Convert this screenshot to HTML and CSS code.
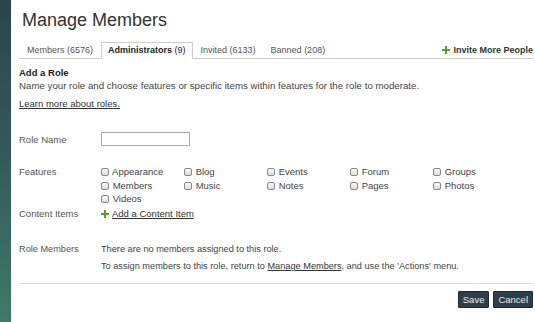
FILE: index.html
```html
<!DOCTYPE html>
<html lang="en">
  <head>
    <meta charset="UTF-8" />
    <title>Manage Members</title>
    <link rel="stylesheet" href="styles.css">
  </head>
  <body>
    <div class="sidebar"></div>
    <div class="main">
      <h1>Manage Members</h1>
      <div class="tabs">
        <a class="tab">Members <span class="count">(6576)</span></a>
        <a class="tab active">Administrators <span class="count">(9)</span></a>
        <a class="tab">Invited <span class="count">(6133)</span></a>
        <a class="tab">Banned <span class="count">(208)</span></a>
        <a class="invite"><svg class="plus" viewBox="0 0 8 8"><path d="M3 0h2v3h3v2H5v3H3V5H0V3h3z"/></svg>Invite More People</a>
      </div>

      <h2>Add a Role</h2>
      <p class="intro">Name your role and choose features or specific items within features for the role to moderate.</p>
      <p class="learn"><a href="#">Learn more about roles.</a></p>

      <div class="row role-name">
        <label for="roleName">Role Name</label>
        <div><input type="text" id="roleName" /></div>
      </div>

      <div class="row features">
        <label>Features</label>
        <div class="feature-grid">
          <label class="check"><input type="checkbox" /> Appearance</label>
          <label class="check"><input type="checkbox" /> Blog</label>
          <label class="check"><input type="checkbox" /> Events</label>
          <label class="check"><input type="checkbox" /> Forum</label>
          <label class="check"><input type="checkbox" /> Groups</label>
          <label class="check"><input type="checkbox" /> Members</label>
          <label class="check"><input type="checkbox" /> Music</label>
          <label class="check"><input type="checkbox" /> Notes</label>
          <label class="check"><input type="checkbox" /> Pages</label>
          <label class="check"><input type="checkbox" /> Photos</label>
          <label class="check"><input type="checkbox" /> Videos</label>
        </div>
      </div>

      <div class="row content-items">
        <label>Content Items</label>
        <div><svg class="plus" viewBox="0 0 8 8"><path d="M3 0h2v3h3v2H5v3H3V5H0V3h3z"/></svg><a href="#">Add a Content Item</a></div>
      </div>

      <div class="row role-members">
        <label>Role Members</label>
        <div>
          <p>There are no members assigned to this role.</p>
          <p>To assign members to this role, return to <a href="#">Manage Members</a>, and use the 'Actions' menu.</p>
        </div>
      </div>

      <div class="actions">
        <button type="button">Save</button>
        <button type="button">Cancel</button>
      </div>
    </div>
  </body>
</html>
```

FILE: styles.css
```css
body {
  margin: 0;
  display: flex;
  min-height: 322px;
  background-color: #fff;
  color: #444;
  font-family: "Liberation Sans", Arial, sans-serif;
  font-size: 9.5px;
  line-height: 13px;
}
.sidebar {
  width: 11px;
  flex-shrink: 0;
  background: linear-gradient(to bottom, #2b4550, #33585a 45%, #3f7a66);
}
.main {
  flex: 1;
  padding: 9px 2px 0 8px;
}
h1 {
  margin: 0 0 0 3px;
  font-size: 18px;
  font-weight: normal;
  line-height: 22px;
  color: #333;
}
.tabs {
  display: flex;
  align-items: flex-end;
  margin-top: 11px;
  border-bottom: 1px solid #ccc;
  height: 16px;
  font-size: 9px;
}
.tab {
  padding: 0 6px;
  line-height: 15px;
  color: #555;
  border: 1px solid transparent;
  border-bottom: none;
  margin-left: 1px;
}
.tab.active {
  color: #222;
  font-weight: bold;
  background-color: #fff;
  border-color: #ccc;
  margin-bottom: -1px;
  padding-bottom: 1px;
}
.tab .count {
  font-weight: normal;
}
.invite {
  margin-left: auto;
  font-weight: bold;
  color: #333;
  line-height: 15px;
}
.plus {
  width: 8px;
  height: 8px;
  fill: #5c9b2e;
  margin-right: 3px;
  vertical-align: -1px;
}
h2 {
  margin: 7px 0 0;
  font-size: 9.5px;
  line-height: 13px;
  color: #222;
}
p {
  margin: 0;
}
a {
  color: #333;
}
.intro {
  font-size: 9.7px;
}
.learn {
  margin-top: 5px;
}
.row {
  display: grid;
  grid-template-columns: 82px 1fr;
}
.row label {
  color: #555;
}
.role-name {
  margin-top: 22px;
  align-items: center;
}
.role-name input {
  display: block;
  width: 89px;
  height: 14px;
  box-sizing: border-box;
  margin: 0;
  border: 1px solid #aaa;
  background-color: #fff;
}
.features {
  margin-top: 19px;
}
.feature-grid {
  display: grid;
  grid-template-columns: repeat(5, 83px);
  row-gap: 0.5px;
}
.feature-grid .check {
  color: #444;
  white-space: nowrap;
}
.check input {
  appearance: none;
  width: 8px;
  height: 8px;
  margin: 0 1px 0 0;
  border: 1px solid #888;
  border-radius: 2px;
  background: linear-gradient(to bottom, #fafafa, #ddd);
  vertical-align: -1px;
}
.content-items {
  margin-top: 2px;
}
.role-members {
  margin-top: 23px;
  font-size: 9.2px;
}
.role-members p + p {
  margin-top: 4px;
}
.actions {
  display: flex;
  justify-content: flex-end;
  gap: 4px;
  margin-top: 10px;
  padding-top: 7px;
  border-top: 1px solid #ddd;
}
.actions button {
  height: 17px;
  padding: 0 4px;
  border: 1px solid #1c2a33;
  border-radius: 1px;
  background-color: #2c3e4a;
  color: #eee;
  font-family: inherit;
  font-size: 9.5px;
}
```
